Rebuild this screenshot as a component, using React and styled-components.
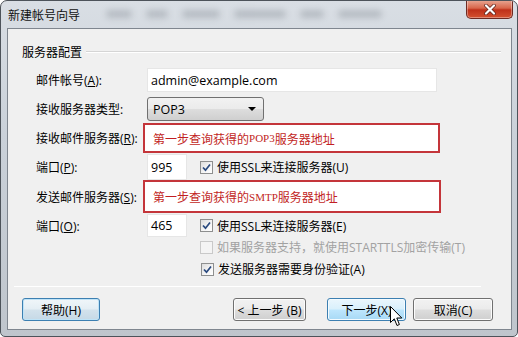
import React from 'react';
import styled, { createGlobalStyle, css } from 'styled-components';

const GlobalStyle = createGlobalStyle`
  html, body {
    margin: 0;
    padding: 0;
    width: 518px;
    height: 337px;
    overflow: hidden;
    background: #ffffff;
  }
  * {
    box-sizing: border-box;
  }
`;

const font = `"Open Sans", "Noto Sans CJK SC", sans-serif`;

const Window = styled.div`
  position: relative;
  width: 518px;
  height: 337px;
  display: flex;
  flex-direction: column;
  border: 1px solid #4d535a;
  border-radius: 7px 7px 5px 5px;
  background: linear-gradient(180deg, #d9dee4 0%, #cad1d9 40%, #bfc5cc 100%);
  font-family: ${font};
  font-size: 12px;
  color: #000;
  overflow: hidden;
`;

const TitleBar = styled.div`
  height: 27px;
  display: flex;
  align-items: flex-start;
  padding-left: 7px;
`;

const Title = styled.div`
  margin-top: 5px;
  font-size: 12px;
  color: #111;
  white-space: nowrap;
`;

const Blurs = styled.div`
  flex: 1;
  display: flex;
  gap: 14px;
  margin: 9px 0 0 26px;
`;

const Blob = styled.span`
  display: block;
  width: ${p => p.$w}px;
  height: 8px;
  border-radius: 4px;
  background: #8d949c;
  opacity: 0.45;
  filter: blur(3px);
`;

const CloseButton = styled.div`
  width: 47px;
  height: 19px;
  margin: -1px 4px 0 0;
  display: flex;
  align-items: center;
  justify-content: center;
  border: 1px solid #6e2a22;
  border-top: none;
  border-radius: 0 0 5px 5px;
  background: linear-gradient(180deg, #e9a996 0%, #d8664b 45%, #bf3019 55%, #d4512f 100%);
  box-shadow: inset 0 0 0 1px rgba(255, 255, 255, 0.35);
`;

const Client = styled.div`
  flex: 1;
  margin: 0 5px 6px 6px;
  border: 1px solid #7f868f;
  background: #f0f0f0;
  display: flex;
  flex-direction: column;
  padding-top: 16px;
`;

const GroupHeader = styled.div`
  display: flex;
  align-items: center;
  height: 14px;
  padding: 0 10px 0 14px;
  gap: 4px;
  white-space: nowrap;
  &::after {
    content: '';
    flex: 1;
    height: 1px;
    background: #d5d5d5;
    border-bottom: 1px solid #ffffff;
  }
`;

const Form = styled.div`
  display: flex;
  flex-direction: column;
  padding-left: 28px;
  margin-top: 9px;
`;

const Row = styled.div`
  display: flex;
  align-items: center;
  margin-top: ${p => p.$mt || 0}px;
  padding-left: ${p => p.$indent || 0}px;
`;

const Label = styled.div`
  width: 111px;
  white-space: nowrap;
  u {
    text-decoration: underline;
    text-underline-offset: 1px;
  }
`;

const TextBox = styled.div`
  width: ${p => p.$w}px;
  height: ${p => p.$h}px;
  display: flex;
  align-items: center;
  padding-left: 3px;
  background: #ffffff;
  border: 1px solid #e6e6e6;
  font-size: 12.5px;
`;

const Select = styled.div`
  width: 117px;
  height: 24px;
  display: flex;
  align-items: center;
  justify-content: space-between;
  padding: 0 7px 0 5px;
  border: 1px solid #707070;
  border-radius: 3px;
  background: linear-gradient(180deg, #f2f2f2 0%, #ebebeb 48%, #dddddd 52%, #cfcfcf 100%);
  font-size: 12.5px;
`;

const Arrow = styled.span`
  width: 0;
  height: 0;
  border-left: 4px solid transparent;
  border-right: 4px solid transparent;
  border-top: 4px solid #000;
`;

const NoteBox = styled.div`
  margin-left: -4px;
  width: ${p => p.$w}px;
  height: ${p => p.$h}px;
  display: flex;
  align-items: center;
  padding-left: 8px;
  background: #ffffff;
  border: 2px solid #c4353a;
  color: #c21f24;
  font-family: "Noto Sans CJK SC", sans-serif;
  font-size: 12px;
  span {
    font-family: "Liberation Serif", serif;
    font-size: 11px;
  }
`;

const Check = styled.label`
  display: flex;
  align-items: center;
  gap: 4px;
  margin-left: ${p => p.$ml || 0}px;
  white-space: nowrap;
  color: ${p => (p.$disabled ? '#a2a2a2' : '#000')};
`;

const Box = styled.span`
  width: 13px;
  height: 13px;
  display: flex;
  align-items: center;
  justify-content: center;
  border: 1px solid ${p => (p.$disabled ? '#c9c9c9' : '#8e8f8f')};
  background: ${p =>
    p.$disabled
      ? '#f4f4f4'
      : 'linear-gradient(135deg, #dcdcdc 0%, #f6f6f6 60%, #ffffff 100%)'};
`;

const Separator = styled.div`
  margin: 8px 30px 0 6px;
  height: 1px;
  background: #d5d5d5;
  border-bottom: 1px solid #ffffff;
`;

const ButtonBar = styled.div`
  display: flex;
  align-items: center;
  margin-top: 11px;
  padding: 0 18px 0 14px;
`;

const Spacer = styled.div`
  flex: 1;
`;

const variants = {
  normal: css`
    border: 1px solid #707070;
    background: linear-gradient(180deg, #f2f2f2 0%, #ebebeb 48%, #dddddd 52%, #cfcfcf 100%);
    box-shadow: inset 0 0 0 1px #fcfcfc;
  `,
  focus: css`
    border: 1px solid #3c7fb1;
    background: linear-gradient(180deg, #f0f6f9 0%, #e4eef4 48%, #d3e2ec 52%, #c6d9e6 100%);
    box-shadow: inset 0 0 0 1px #bfe3f7;
  `,
  hover: css`
    border: 1px solid #3c7fb1;
    background: linear-gradient(180deg, #eaf6fd 0%, #d9f0fc 48%, #bee6fd 52%, #a7d9f5 100%);
    box-shadow: inset 0 0 0 1px #f4fbff;
  `,
};

const Button = styled.div`
  width: ${p => p.$w}px;
  height: 23px;
  margin-left: ${p => p.$ml || 0}px;
  display: flex;
  align-items: center;
  justify-content: center;
  border-radius: 3px;
  white-space: nowrap;
  ${p => variants[p.$variant || 'normal']}
`;

const Cursor = styled.svg`
  position: absolute;
  left: 389px;
  top: 305px;
`;

const Tick = () => (
  <svg width="9" height="9" viewBox="0 0 9 9">
    <path d="M1 4.5 L3.5 7.2 L8 1.5" fill="none" stroke="#2a4a7f" strokeWidth="1.7" />
  </svg>
);

const App = () => (
  <>
    <GlobalStyle />
    <Window>
      <TitleBar>
        <Title>新建帐号向导</Title>
        <Blurs>
          <Blob $w={26} />
          <Blob $w={22} />
          <Blob $w={38} />
          <Blob $w={52} />
          <Blob $w={24} />
          <Blob $w={44} />
        </Blurs>
        <CloseButton>
          <svg width="12" height="11" viewBox="0 0 12 11">
            <path d="M2 1.5 L10 9.5 M10 1.5 L2 9.5" stroke="#5a2019" strokeWidth="3.6" strokeLinecap="round" />
            <path d="M2 1.5 L10 9.5 M10 1.5 L2 9.5" stroke="#ffffff" strokeWidth="2.2" strokeLinecap="round" />
          </svg>
        </CloseButton>
      </TitleBar>
      <Client>
        <GroupHeader>服务器配置</GroupHeader>
        <Form>
          <Row>
            <Label>邮件帐号(<u>A</u>):</Label>
            <TextBox $w={290} $h={24}>admin@example.com</TextBox>
          </Row>
          <Row $mt={5}>
            <Label>接收服务器类型:</Label>
            <Select>
              POP3
              <Arrow />
            </Select>
          </Row>
          <Row $mt={2}>
            <Label>接收邮件服务器(<u>R</u>):</Label>
            <NoteBox $w={297} $h={30}>
              第一步查询获得的<span>POP3</span>服务器地址
            </NoteBox>
          </Row>
          <Row $mt={1}>
            <Label>端口(<u>P</u>):</Label>
            <TextBox $w={40} $h={26}>995</TextBox>
            <Check $ml={13}>
              <Box><Tick /></Box>
              使用SSL来连接服务器(U)
            </Check>
          </Row>
          <Row>
            <Label>发送邮件服务器(<u>S</u>):</Label>
            <NoteBox $w={298} $h={33}>
              第一步查询获得的<span>SMTP</span>服务器地址
            </NoteBox>
          </Row>
          <Row $mt={1}>
            <Label>端口(<u>O</u>):</Label>
            <TextBox $w={40} $h={23}>465</TextBox>
            <Check $ml={13}>
              <Box><Tick /></Box>
              使用SSL来连接服务器(E)
            </Check>
          </Row>
          <Row $mt={1} $indent={164}>
            <Check $disabled>
              <Box $disabled />
              如果服务器支持，就使用STARTTLS加密传输(T)
            </Check>
          </Row>
          <Row $mt={4} $indent={165}>
            <Check>
              <Box><Tick /></Box>
              发送服务器需要身份验证(A)
            </Check>
          </Row>
        </Form>
        <Separator />
        <ButtonBar>
          <Button $w={78} $variant="focus">帮助(H)</Button>
          <Spacer />
          <Button $w={73}>&lt; 上一步 (B)</Button>
          <Button $w={79} $ml={21} $variant="hover">下一步(X)</Button>
          <Button $w={80} $ml={7}>取消(C)</Button>
        </ButtonBar>
      </Client>
      <Cursor width="13" height="21" viewBox="0 0 13 21">
        <path
          d="M0.5 0.5 L0.5 16.5 L4.3 12.8 L7 19.5 L9.4 18.5 L6.8 12 L11.8 12 Z"
          fill="#ffffff"
          stroke="#000000"
          strokeWidth="1"
          strokeLinejoin="round"
        />
      </Cursor>
    </Window>
  </>
);

export default App;
